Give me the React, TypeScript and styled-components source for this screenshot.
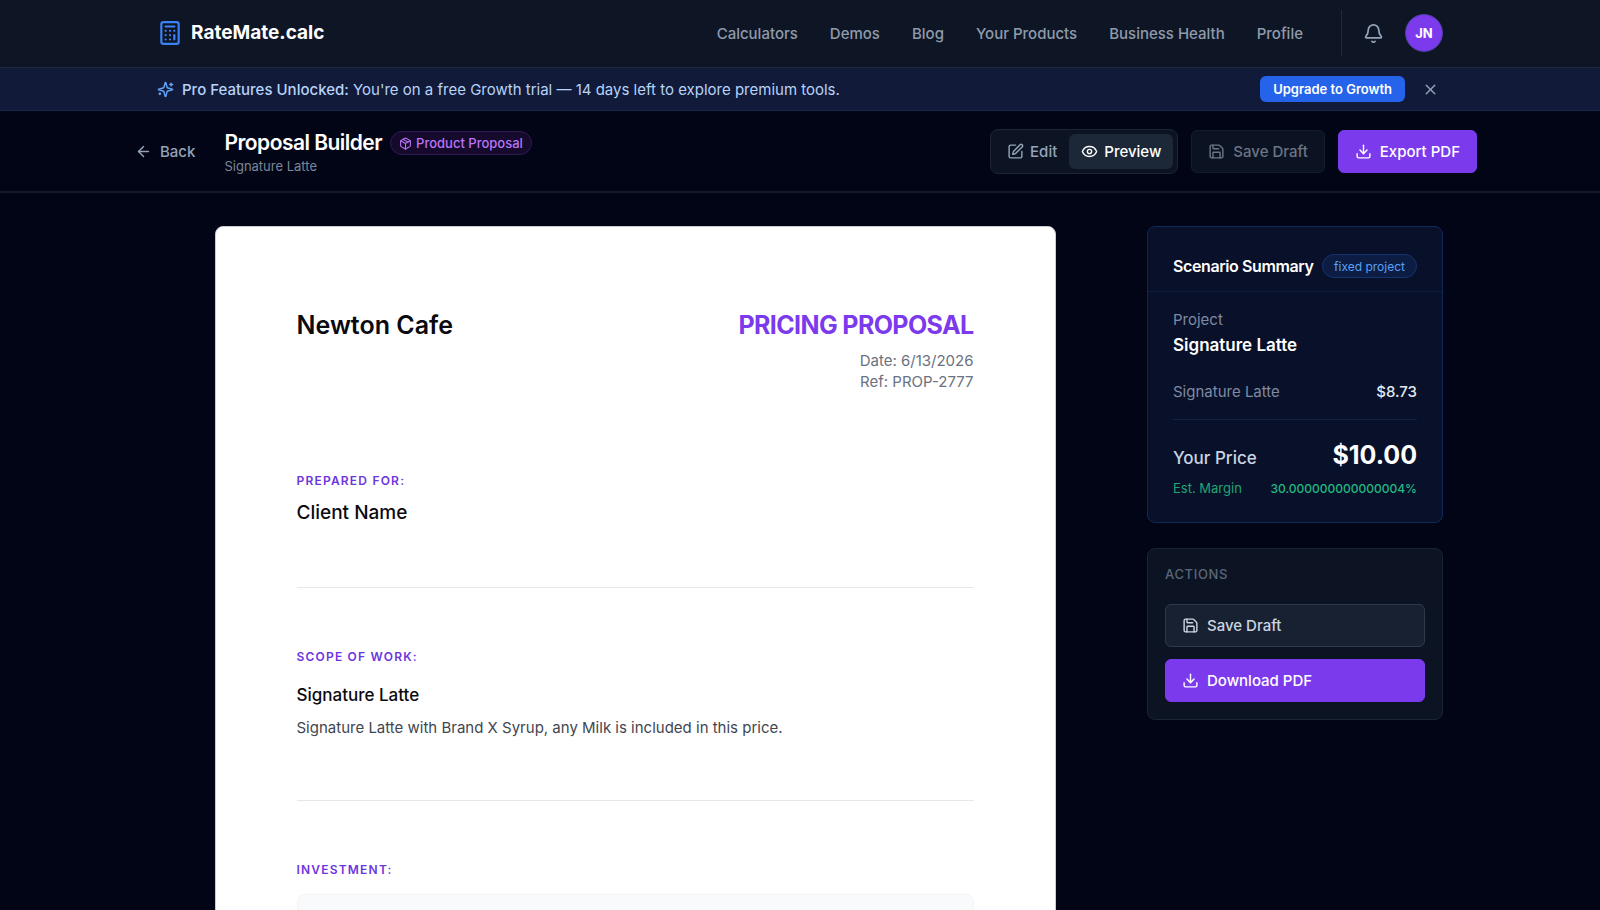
import React, { useState } from "react";
import styled, { createGlobalStyle, css } from "styled-components";
import {
  ArrowLeft,
  Bell,
  Calculator,
  Download,
  Eye,
  Package,
  Save,
  SquarePen,
  X,
} from "lucide-react";

const GlobalStyle = createGlobalStyle`
  *, *::before, *::after { box-sizing: border-box; }
  body {
    margin: 0;
    background: #020516;
    color: #f8fafc;
    font-family: Inter, "Liberation Sans", sans-serif;
    font-size: 15px;
    line-height: 21px;
    -webkit-font-smoothing: antialiased;
  }
  h1, h2, h3, p, dl, dt, dd { margin: 0; font-size: inherit; font-weight: inherit; }
  button { font: inherit; color: inherit; background: none; border: 0; padding: 0; cursor: pointer; }
  a { color: inherit; text-decoration: none; }
  svg { flex: none; display: block; }
`;

const Page = styled.div`
  height: 100vh;
  overflow: hidden;
`;

const container = css`
  max-width: 1354px;
  margin: 0 auto;
`;

const Header = styled.header`
  background: #0e1626;
  border-bottom: 1px solid #1e2a3a;
`;

const HeaderInner = styled.div`
  ${container}
  display: flex;
  align-items: center;
  justify-content: space-between;
  padding: 10px 34px 11px;
`;

const Brand = styled.a`
  display: flex;
  align-items: center;
  gap: 8px;
  font-size: 19px;
  font-weight: 700;
  line-height: 30px;
  color: #fff;

  svg { color: #3b82f6; }
`;

const Nav = styled.nav`
  display: flex;
  align-items: center;
  gap: 32px;
  color: #8f9bab;
  font-weight: 500;
`;

const UserTools = styled.div`
  display: flex;
  align-items: center;
  gap: 21px;
  height: 46px;
  margin-left: 6px;
  padding-left: 21px;
  border-left: 1px solid #1e293b;
`;

const IconButton = styled.button`
  color: #94a3b8;
`;

const Avatar = styled.button`
  width: 38px;
  height: 38px;
  border: 1px solid #4c3fa0;
  border-radius: 50%;
  background: #7c3aed;
  color: #fff;
  font-size: 13px;
  font-weight: 700;
`;

const Banner = styled.div`
  background: #111a38;
  border-bottom: 1px solid #172548;
`;

const BannerInner = styled.div`
  ${container}
  display: flex;
  align-items: center;
  justify-content: space-between;
  padding: 8px 34px;
`;

const BannerText = styled.p`
  display: flex;
  align-items: center;
  gap: 8px;
  color: #b7d3f8;

  svg { color: #60a5fa; }
  strong { font-weight: 500; }
`;

const BannerActions = styled.div`
  display: flex;
  align-items: center;
  gap: 17px;
  padding-right: 4px;
`;

const UpgradeButton = styled.button`
  height: 26px;
  padding: 0 13px;
  border-radius: 6px;
  background: #2563eb;
  color: #fff;
  font-size: 13px;
  font-weight: 600;
`;

const Toolbar = styled.div`
  border-bottom: 2px solid #151a2a;
`;

const ToolbarInner = styled.div`
  ${container}
  display: flex;
  align-items: center;
  justify-content: space-between;
  padding: 17px 0 16px;
`;

const Cluster = styled.div<{ $gap: number }>`
  display: flex;
  align-items: center;
  gap: ${(p) => p.$gap}px;
`;

const BackButton = styled.button`
  display: flex;
  align-items: center;
  gap: 8px;
  padding: 0 12px;
  color: #94a3b8;
  font-weight: 500;
`;

const Title = styled.h1`
  font-size: 21px;
  line-height: 30px;
  font-weight: 600;
  letter-spacing: -0.025em;
  color: #fff;
`;

const Subtitle = styled.p`
  font-size: 13px;
  line-height: 17px;
  color: #7c8799;
`;

const Pill = styled.span<{ $tone: "purple" | "blue" }>`
  display: inline-flex;
  align-items: center;
  gap: 4px;
  height: 24px;
  padding: 0 ${(p) => (p.$tone === "purple" ? 8 : 11)}px;
  border: 1px solid ${(p) => (p.$tone === "purple" ? "#2f1a55" : "#15336f")};
  border-radius: 12px;
  background: ${(p) => (p.$tone === "purple" ? "#160a2c" : "#0d1c43")};
  color: ${(p) => (p.$tone === "purple" ? "#b975f5" : "#58a0f8")};
  font-size: ${(p) => (p.$tone === "purple" ? 13 : 12)}px;
  font-weight: ${(p) => (p.$tone === "purple" ? 500 : 400)};
  line-height: 17px;
  white-space: nowrap;
`;

const Segmented = styled.div`
  display: flex;
  height: 45px;
  padding: 4px;
  border: 1px solid #1c2637;
  border-radius: 8px;
  background: #0c1424;
`;

const Segment = styled.button<{ $active: boolean }>`
  display: flex;
  align-items: center;
  gap: 6px;
  padding: 0 12px;
  border-radius: 6px;
  background: ${(p) => (p.$active ? "#1c2737" : "transparent")};
  color: ${(p) => (p.$active ? "#fff" : "#94a3b8")};
  font-weight: 500;
`;

const Button = styled.button<{ $kind: "primary" | "muted" | "outline" }>`
  display: flex;
  align-items: center;
  gap: 8px;
  height: 43px;
  padding: 0 16px;
  border: 1px solid transparent;
  border-radius: 6px;
  font-weight: 500;
  white-space: nowrap;

  ${(p) =>
    p.$kind === "primary" &&
    css`
      background: #7c3aed;
      border-color: #7c3aed;
      color: #fff;
    `}
  ${(p) =>
    p.$kind === "muted" &&
    css`
      background: #0b1221;
      border-color: #141d2c;
      color: #6b7585;
    `}
  ${(p) =>
    p.$kind === "outline" &&
    css`
      background: #172131;
      border-color: #2e3a4b;
      color: #cbd5e1;
    `}
`;

const Main = styled.main`
  ${container}
  display: grid;
  grid-template-columns: repeat(4, minmax(0, 1fr));
  gap: 34px;
  align-items: start;
  padding: 33px 34px;
`;

const PreviewColumn = styled.div`
  grid-column: span 3;
  display: flex;
  justify-content: center;
`;

const Paper = styled.article`
  width: 100%;
  max-width: 841px;
  min-height: 1189px;
  padding: 81px;
  border: 1px solid #c9ccd3;
  border-radius: 8px;
  background: #fff;
  color: #0a0a0f;
`;

const PaperHead = styled.header`
  display: flex;
  justify-content: space-between;
  align-items: flex-start;
  margin-bottom: 80px;
`;

const Company = styled.h2`
  font-size: 25px;
  line-height: 34px;
  font-weight: 600;
`;

const DocMeta = styled.div`
  text-align: right;
  color: #6b7280;
`;

const DocTitle = styled.h2`
  margin-bottom: 8px;
  font-size: 25px;
  line-height: 34px;
  font-weight: 700;
  letter-spacing: -0.025em;
  color: #7c3aed;
`;

const Section = styled.section`
  padding-bottom: 60px;
  margin-bottom: 60px;
  border-bottom: 1px solid #e5e7eb;
`;

const Label = styled.h3`
  margin-bottom: 10px;
  font-size: 12px;
  line-height: 17px;
  font-weight: 600;
  letter-spacing: 0.1em;
  text-transform: uppercase;
  color: #6d35de;
`;

const ClientName = styled.p`
  font-size: 19px;
  line-height: 28px;
  font-weight: 500;
`;

const ItemName = styled.p`
  margin: 18px 0 8px;
  font-size: 17px;
  line-height: 25px;
  font-weight: 500;
`;

const ItemText = styled.p`
  line-height: 24px;
  color: #42464f;
`;

const InvestmentBox = styled.div`
  height: 160px;
  margin-top: 16px;
  border: 1px solid #f3f4f6;
  border-radius: 8px;
  background: #f9fafb;
`;

const Sidebar = styled.aside`
  display: flex;
  flex-direction: column;
  gap: 25px;
`;

const SummaryCard = styled.section`
  border: 1px solid #10275a;
  border-radius: 8px;
  background: #08102a;
`;

const SummaryHead = styled.div`
  display: flex;
  align-items: center;
  justify-content: space-between;
  padding: 26px 25px 12px;
  border-bottom: 1px solid #0f1d3c;
`;

const SummaryTitle = styled.h2`
  font-size: 16px;
  line-height: 26px;
  font-weight: 600;
  letter-spacing: -0.025em;
  white-space: nowrap;
  color: #fff;
`;

const SummaryBody = styled.div`
  padding: 17px 25px 25px;
`;

const Muted = styled.p`
  color: #7f8aa3;
`;

const ProjectName = styled.p`
  margin: 3px 0 23px;
  font-size: 17px;
  line-height: 25px;
  font-weight: 600;
  color: #fff;
`;

const Line = styled.div<{ $rule?: boolean }>`
  display: flex;
  align-items: baseline;
  justify-content: space-between;
  white-space: nowrap;
  ${(p) =>
    p.$rule &&
    css`
      margin-bottom: 18px;
      padding-bottom: 17px;
      border-bottom: 1px solid #13213f;
    `}
`;

const Amount = styled.span`
  color: #e2e8f0;
  font-weight: 500;
`;

const PriceLabel = styled.span`
  font-size: 17px;
  line-height: 25px;
  font-weight: 500;
  color: #cbd5e1;
`;

const Price = styled.span`
  font-size: 25px;
  line-height: 34px;
  font-weight: 700;
  color: #fff;
`;

const Margin = styled.div`
  display: flex;
  justify-content: space-between;
  margin-top: 8px;
  font-size: 13px;
  line-height: 17px;
  color: #22a574;
`;

const MarginValue = styled.span`
  font-size: 12px;
  font-weight: 500;
  color: #22b981;
`;

const ActionsCard = styled.section`
  display: flex;
  flex-direction: column;
  gap: 12px;
  padding: 17px;
  border: 1px solid #1a2434;
  border-radius: 8px;
  background: #0c1424;
`;

const ActionsTitle = styled.h2`
  margin-bottom: 9px;
  font-size: 13px;
  line-height: 17px;
  font-weight: 500;
  letter-spacing: 0.05em;
  text-transform: uppercase;
  color: #5b6678;
`;

function Sparkle({ size }: { size: number }) {
  return (
    <svg
      width={size}
      height={size}
      viewBox="0 0 24 24"
      fill="none"
      stroke="currentColor"
      strokeWidth="2"
      strokeLinecap="round"
      strokeLinejoin="round"
      aria-hidden="true"
    >
      <path d="M9.937 15.5A2 2 0 0 0 8.5 14.063l-6.135-1.582a.5.5 0 0 1 0-.962L8.5 9.936A2 2 0 0 0 9.937 8.5l1.582-6.135a.5.5 0 0 1 .963 0L14.063 8.5A2 2 0 0 0 15.5 9.937l6.135 1.581a.5.5 0 0 1 0 .964L15.5 14.063a2 2 0 0 0-1.437 1.437l-1.582 6.135a.5.5 0 0 1-.963 0z" />
      <path d="M20 3v4" />
      <path d="M22 5h-4" />
      <path d="M4 17v2" />
      <path d="M5 18H3" />
    </svg>
  );
}

const links = ["Calculators", "Demos", "Blog", "Your Products", "Business Health", "Profile"];

export default function App() {
  const [mode, setMode] = useState<"edit" | "preview">("preview");
  const [bannerOpen, setBannerOpen] = useState(true);

  return (
    <Page>
      <GlobalStyle />
      <Header>
        <HeaderInner>
          <Brand href="#">
            <Calculator size={26} />
            RateMate.calc
          </Brand>
          <Nav aria-label="Main">
            {links.map((link) => (
              <a href="#" key={link}>{link}</a>
            ))}
            <UserTools>
              <IconButton type="button" aria-label="Notifications">
                <Bell size={21} />
              </IconButton>
              <Avatar type="button">JN</Avatar>
            </UserTools>
          </Nav>
        </HeaderInner>
      </Header>

      {bannerOpen && (
        <Banner>
          <BannerInner>
            <BannerText>
              <Sparkle size={17} />
              <span>
                <strong>Pro Features Unlocked:</strong> You're on a free Growth trial — 14 days left to
                explore premium tools.
              </span>
            </BannerText>
            <BannerActions>
              <UpgradeButton type="button">Upgrade to Growth</UpgradeButton>
              <IconButton type="button" aria-label="Dismiss" onClick={() => setBannerOpen(false)}>
                <X size={17} />
              </IconButton>
            </BannerActions>
          </BannerInner>
        </Banner>
      )}

      <Toolbar>
        <ToolbarInner>
          <Cluster $gap={17}>
            <BackButton type="button">
              <ArrowLeft size={17} />
              Back
            </BackButton>
            <div>
              <Cluster $gap={8}>
                <Title>Proposal Builder</Title>
                <Pill $tone="purple">
                  <Package size={13} />
                  Product Proposal
                </Pill>
              </Cluster>
              <Subtitle>Signature Latte</Subtitle>
            </div>
          </Cluster>
          <Cluster $gap={13}>
            <Segmented>
              <Segment type="button" $active={mode === "edit"} onClick={() => setMode("edit")}>
                <SquarePen size={17} />
                Edit
              </Segment>
              <Segment type="button" $active={mode === "preview"} onClick={() => setMode("preview")}>
                <Eye size={17} />
                Preview
              </Segment>
            </Segmented>
            <Button type="button" $kind="muted" disabled>
              <Save size={17} />
              Save Draft
            </Button>
            <Button type="button" $kind="primary">
              <Download size={17} />
              Export PDF
            </Button>
          </Cluster>
        </ToolbarInner>
      </Toolbar>

      <Main>
        <PreviewColumn>
          <Paper>
            <PaperHead>
              <Company>Newton Cafe</Company>
              <DocMeta>
                <DocTitle>PRICING PROPOSAL</DocTitle>
                <p>Date: 6/13/2026</p>
                <p>Ref: PROP-2777</p>
              </DocMeta>
            </PaperHead>
            <Section>
              <Label>Prepared for:</Label>
              <ClientName>Client Name</ClientName>
            </Section>
            <Section>
              <Label>Scope of work:</Label>
              <ItemName>Signature Latte</ItemName>
              <ItemText>Signature Latte with Brand X Syrup, any Milk is included in this price.</ItemText>
            </Section>
            <Label>Investment:</Label>
            <InvestmentBox />
          </Paper>
        </PreviewColumn>

        <Sidebar>
          <SummaryCard>
            <SummaryHead>
              <SummaryTitle>Scenario Summary</SummaryTitle>
              <Pill $tone="blue">fixed project</Pill>
            </SummaryHead>
            <SummaryBody>
              <Muted>Project</Muted>
              <ProjectName>Signature Latte</ProjectName>
              <Line $rule>
                <Muted>Signature Latte</Muted>
                <Amount>$8.73</Amount>
              </Line>
              <Line>
                <PriceLabel>Your Price</PriceLabel>
                <Price>$10.00</Price>
              </Line>
              <Margin>
                <span>Est. Margin</span>
                <MarginValue>30.000000000000004%</MarginValue>
              </Margin>
            </SummaryBody>
          </SummaryCard>
          <ActionsCard>
            <ActionsTitle>Actions</ActionsTitle>
            <Button type="button" $kind="outline">
              <Save size={17} />
              Save Draft
            </Button>
            <Button type="button" $kind="primary">
              <Download size={17} />
              Download PDF
            </Button>
          </ActionsCard>
        </Sidebar>
      </Main>
    </Page>
  );
}
